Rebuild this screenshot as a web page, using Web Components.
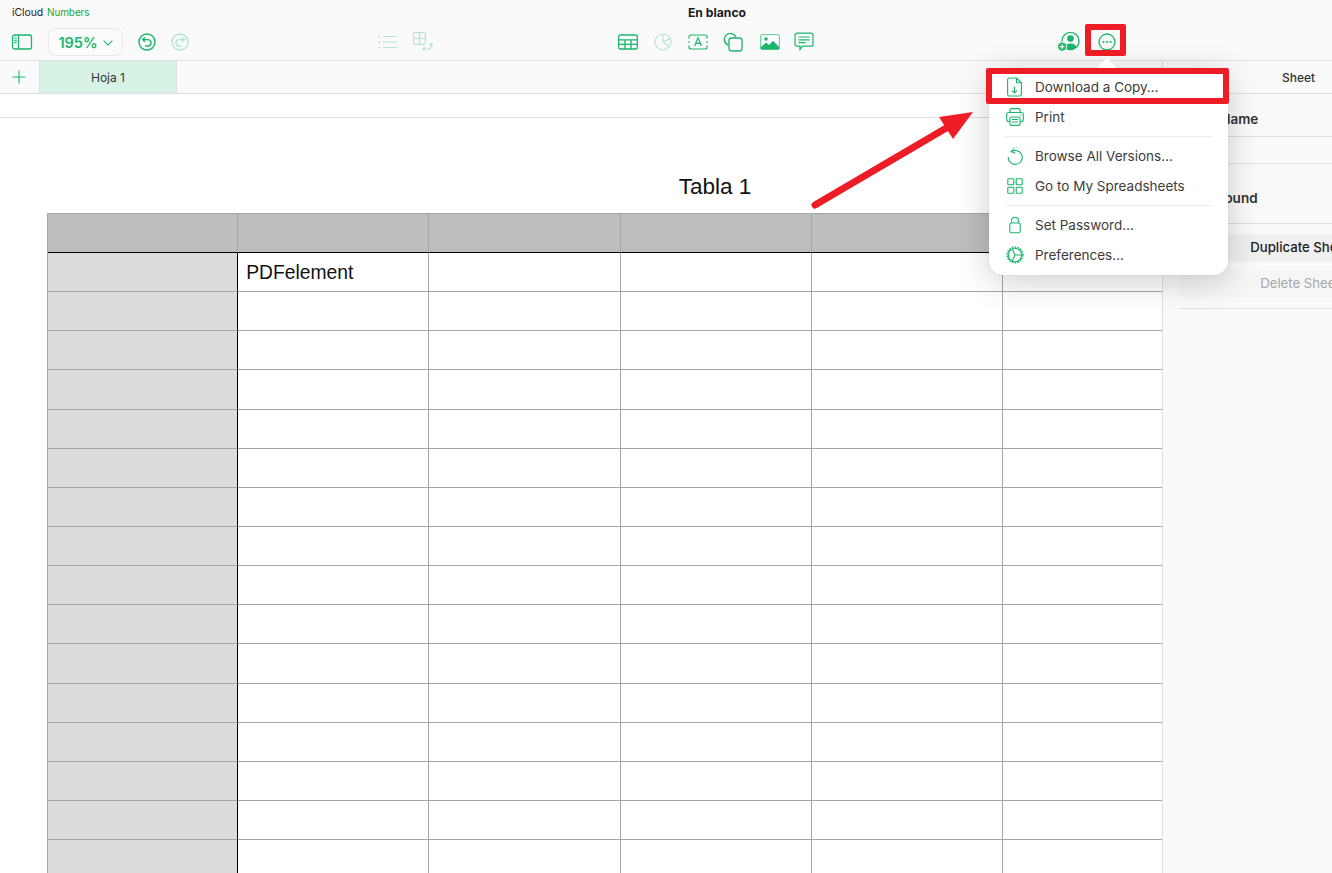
<!doctype html>
<html lang="es">
<head>
<meta charset="utf-8">
<title>En blanco - Numbers</title>
<style>
  html,body{margin:0;height:100%;overflow:hidden;background:#fff}
  body{font-family:Inter,"Liberation Sans",sans-serif}
</style>
</head>
<body>
<numbers-app></numbers-app>
<script>
const G = "#1bb56c";
const ICONS = {
  sidebar: `<svg width="22" height="18" viewBox="0 0 22 18" fill="none" stroke="${G}" stroke-width="1.3"><rect x="1.5" y="2" width="19" height="14" rx="2"/><path d="M7.5 2v14"/><path d="M3.2 5h2.6M3.2 7.2h2.6M3.2 9.4h2.6" stroke-width="1.1"/></svg>`,
  undo: `<svg width="20" height="20" viewBox="0 0 20 20" fill="none" stroke="${G}" stroke-width="1.4"><circle cx="10" cy="10" r="8"/><path d="M8 5.4 5.6 7.6 8 9.8"/><path d="M5.8 7.6h5a3.2 3.2 0 0 1 0 6.4H8.2"/></svg>`,
  redo: `<svg width="20" height="20" viewBox="0 0 20 20" fill="none" stroke="${G}" stroke-width="1.4"><circle cx="10" cy="10" r="8"/><path d="M12 5.4l2.4 2.2L12 9.8"/><path d="M14.2 7.600h-5a3.2 3.2 0 0 0 0 6.4h2.6"/></svg>`,
  list: `<svg width="20" height="16" viewBox="0 0 20 16" fill="none" stroke="${G}" stroke-width="1.2"><path d="M5 2.5h14M5 8h14M5 13.5h14"/><path d="M.5 2.5h1.6M.5 8h1.6M.5 13.5h1.6" stroke-width="1.8"/></svg>`,
  arrange: `<svg width="20" height="20" viewBox="0 0 20 20" fill="none" stroke="${G}" stroke-width="1.2"><rect x=".6" y=".6" width="11.8" height="11.8" rx="1.5"/><path d="M6.5.6v11.8M.6 6.5h11.8"/><path d="M10 17h5.500a2.5 2.5 0 0 0 2.5-2.5V12"/><path d="M11.8 15.2 10 17l1.8 1.8M16.200 13.200l1.8-1.8 1.8 1.8"/></svg>`,
  table: `<svg width="20" height="16" viewBox="0 0 20 16" fill="none" stroke="${G}" stroke-width="1.3"><rect x=".7" y="1" width="18.6" height="14" rx="1.6"/><path d="M.7 5.8h18.6M.7 10.4h18.6M7 5.8V15M13 5.8V15"/></svg>`,
  pie: `<svg width="18" height="18" viewBox="0 0 18 18" fill="none" stroke="${G}" stroke-width="1.2"><circle cx="9" cy="9" r="8"/><path d="M9 1v8l6.2 4.8M9 9l7.2-3.4"/></svg>`,
  text: `<svg width="20" height="16" viewBox="0 0 20 16" fill="none" stroke="${G}" stroke-width="1.2"><path d="M1 4.6V3a2 2 0 0 1 2-2h14a2 2 0 0 1 2 2v1.6M1 11.4V13a2 2 0 0 0 2 2h14a2 2 0 0 0 2-2v-1.6M0 8h2M18 8h2"/><path d="M6.6 12 10 3.8 13.4 12M7.8 9.4h4.4"/></svg>`,
  shape: `<svg width="20" height="20" viewBox="0 0 20 20" fill="none" stroke="${G}" stroke-width="1.3"><path d="M5.6 13.2A6 6 0 1 1 13 5.4"/><rect x="6" y="6" width="13" height="13" rx="2.5"/></svg>`,
  image: `<svg width="20" height="16" viewBox="0 0 20 16"><rect x=".6" y=".6" width="18.8" height="14.8" rx="2" fill="#fff" stroke="${G}" stroke-opacity=".6" stroke-width="1.2"/><circle cx="6" cy="5" r="1.8" fill="${G}"/><path d="M.6 13.5 6 8.5l3 2.6 4-4.4 6.4 6.6v.6a1.6 1.6 0 0 1-1.6 1.6H2.2a1.6 1.6 0 0 1-1.6-1.6z" fill="${G}"/></svg>`,
  comment: `<svg width="20" height="20" viewBox="0 0 20 20" fill="none" stroke="${G}" stroke-width="1.2"><path d="M3 1.2h14A2 2 0 0 1 19 3.2v9a2 2 0 0 1-2 2H8.500L6 17.4v-3.2H3a2 2 0 0 1-2-2v-9a2 2 0 0 1 2-2z"/><path d="M4.5 5h11M4.5 7.8h11M4.5 10.6h7"/></svg>`,
  collab: `<svg width="24" height="22" viewBox="0 0 24 22" fill="none"><circle cx="13.5" cy="10" r="8.6" stroke="${G}" stroke-width="1.3"/><circle cx="13.5" cy="7.6" r="3.3" fill="${G}"/><path d="M7.6 16c.8-2.600 3-3.600 5.9-3.600s5.100 1 5.900 3.600a8.600 8.600 0 0 1-11.800 0z" fill="${G}"/><circle cx="5.2" cy="15.6" r="4.6" fill="${G}" stroke="#fafafa" stroke-width="1"/><path d="M5.2 13.2v4.8M2.8 15.6h4.8" stroke="#fff" stroke-width="1.2"/></svg>`,
  more: `<svg width="20" height="20" viewBox="0 0 20 20" fill="none"><circle cx="10" cy="10" r="8" stroke="${G}" stroke-width="1.3"/><g fill="${G}"><circle cx="6.4" cy="10" r="1.1"/><circle cx="10" cy="10" r="1.1"/><circle cx="13.6" cy="10" r="1.1"/></g></svg>`,
  plus: `<svg width="14" height="14" viewBox="0 0 14 14" fill="none" stroke="${G}" stroke-width="1.1"><path d="M7 .5v13M.5 7h13"/></svg>`,
  download: `<svg width="16" height="20" viewBox="0 0 16 20" fill="none" stroke="${G}" stroke-width="1.1"><path d="M2.4 1H9.5L14.4 5.8V17.2a1.8 1.8 0 0 1-1.8 1.8H2.4A1.8 1.8 0 0 1 .6 17.2V2.8A1.8 1.8 0 0 1 2.4 1z"/><path d="M9.500 1v4.800h4.900"/><path d="M7.500 9.500v6.500M5 13.600 7.500 16 10 13.600"/></svg>`,
  print: `<svg width="18" height="18" viewBox="0 0 18 18" fill="none" stroke="${G}" stroke-width="1.1"><path d="M4 4.5V2a1.4 1.4 0 0 1 1.4-1.4h7.2A1.4 1.4 0 0 1 14 2v2.5"/><rect x=".7" y="4.5" width="16.6" height="9" rx="2"/><rect x="4" y="9" width="10" height="8.4" rx="1.2" fill="#fff"/><path d="M6 11.5h6M6 14h6"/><path d="M14.3 7h1" stroke-width="1.5"/></svg>`,
  versions: `<svg width="16" height="18" viewBox="0 0 16 18" fill="none" stroke="${G}" stroke-width="1.1"><path d="M3.5 5.2A7 7 0 1 1 1.2 10"/><path d="M7.5.8 4 4.600l4.500 1.600" stroke-width="1"/></svg>`,
  grid: `<svg width="16" height="16" viewBox="0 0 16 16" fill="none" stroke="${G}" stroke-width="1.1"><rect x=".8" y=".8" width="6" height="6" rx=".8"/><rect x="9.2" y=".8" width="6" height="6" rx=".8"/><rect x=".8" y="9.2" width="6" height="6" rx=".8"/><rect x="9.2" y="9.2" width="6" height="6" rx=".8"/></svg>`,
  lock: `<svg width="14" height="18" viewBox="0 0 14 18" fill="none" stroke="${G}" stroke-width="1.1"><rect x="1.8" y="7" width="10.4" height="9.8" rx="1.6"/><path d="M3.6 7V4.6a3.4 3.4 0 0 1 6.8 0V7"/></svg>`,
  gear: `<svg width="18" height="18" viewBox="0 0 18 18" fill="none" stroke="${G}" stroke-width="1.1"><circle cx="9" cy="9" r="7.9" stroke-width="1.4" stroke-dasharray="1.6 1.2"/><circle cx="9" cy="9" r="6.7"/><path d="M6.4 3.400 9 9l-2.600 5.600M9 9h6.700"/></svg>`,
};

class AppToolbar extends HTMLElement {
  constructor() { super(); this.attachShadow({ mode: "open" }); }
  connectedCallback() {
    const btn = (n, cls = "", st = "") => `<span class="ic ${cls}" style="${st}">${ICONS[n]}</span>`;
    this.shadowRoot.innerHTML = `
      <style>
        :host{display:block;height:60px;background:#fafafa;border-bottom:1px solid #dedede;font-family:Inter,"Liberation Sans",sans-serif}
        .top{display:flex;align-items:center;height:24px;position:relative}
        .brand{font-size:10.5px;padding-left:12px;color:#1d1d1f;letter-spacing:-.1px;width:120px;flex:0 0 auto}
        .brand b{font-weight:400;color:#22a52f;margin-left:1px;font-size:10px}
        .title{margin-left:555px;width:60px;text-align:center;font-size:12.2px;font-weight:700;color:#1d1d1f;white-space:nowrap}
        .bar{display:flex;align-items:center;height:36px;padding-left:10px}
        .ic{display:flex;align-items:center;justify-content:center;width:24px;height:24px;flex:0 0 auto;margin-left:11px}
        .ic.first{margin-left:0}
        .dim{opacity:.3}
        .zoom{display:flex;align-items:center;justify-content:center;gap:5px;box-sizing:border-box;width:75px;height:28px;margin-left:14px;border:1px solid #e8e8e8;border-radius:8px;background:#fbfbfb;color:${G};font-size:14.5px;font-weight:600}
        .zoom svg{margin-top:1px}
      </style>
      <div class="top"><div class="brand">iCloud <b>Numbers</b></div><div class="title">En blanco</div></div>
      <div class="bar">
        ${btn("sidebar", "first")}
        <div class="zoom">195% <svg width="10" height="6" viewBox="0 0 10 6" fill="none" stroke="${G}" stroke-width="1.1"><path d="M.6.6 5 5 9.4.6"/></svg></div>
        ${btn("undo", "", "margin-left:12px")}
        ${btn("redo", "dim", "margin-left:9px")}
        ${btn("list", "dim", "margin-left:184px")}${btn("arrange", "dim")}
        ${btn("table", "", "margin-left:181px")}${btn("pie", "dim")}${btn("text")}${btn("shape")}${btn("image", "", "margin-left:13px")}${btn("comment", "", "margin-left:10px")}
        ${btn("collab", "", "margin-left:241px")}${btn("more", "", "margin-left:14px")}
      </div>`;
  }
}

class SheetTabs extends HTMLElement {
  constructor() { super(); this.attachShadow({ mode: "open" }); }
  connectedCallback() {
    this.shadowRoot.innerHTML = `
      <style>
        :host{display:flex;height:32px;background:#fafafa;border-bottom:1px solid #dedede;font-family:Inter,"Liberation Sans",sans-serif;font-size:12px;color:#333}
        .add{display:flex;align-items:center;justify-content:center;width:38px;padding-right:1px;border-right:1px solid #dedede}
        .tab{display:flex;align-items:center;justify-content:center;width:137px;padding-top:1px;box-sizing:border-box;background:#d6f3e6;border-right:1px solid #dedede}
        .fill{flex:1}
        .panel{display:flex;align-items:center;justify-content:center;padding-top:1px;flex:0 0 272px;margin-right:-102px;border-left:1px solid #dedede;font-weight:500;box-sizing:border-box}
      </style>
      <div class="add">${ICONS.plus}</div>
      <div class="tab">Hoja 1</div>
      <div class="fill"></div>
      <div class="panel">Sheet</div>`;
  }
}

class SheetTable extends HTMLElement {
  constructor() { super(); this.attachShadow({ mode: "open" }); }
  connectedCallback() {
    const rows = 16, cols = 6;
    let cells = "";
    for (let c = 0; c < cols; c++) cells += `<div class="c h"></div>`;
    for (let r = 0; r < rows; r++) {
      for (let c = 0; c < cols; c++) {
        const txt = r === 0 && c === 1 ? "PDFelement" : "";
        cells += `<div class="c${c === 0 ? " l" : ""}">${txt}</div>`;
      }
    }
    this.shadowRoot.innerHTML = `
      <style>
        :host{display:block;font-family:"Liberation Sans",Arial,sans-serif;color:#111}
        .name{height:54px;width:1430px;text-align:center;font-size:22.5px;line-height:28px;padding-top:14px;box-sizing:border-box}
        .grid{display:grid;grid-template-columns:190.2px repeat(5,191.2px);grid-template-rows:39px repeat(16,39.15px);border-left:1px solid #a6a6a6;margin-left:47px;width:max-content;box-sizing:border-box;border-top:1px solid #a6a6a6}
        .c{box-sizing:border-box;border-right:1px solid #a6a6a6;border-bottom:1px solid #a6a6a6;background:#fff;font-size:19.3px;display:flex;align-items:center;padding:2px 0 0 8px;white-space:nowrap}
        .h{background:#bdbfbe;border-bottom-color:#000}
        .l{background:#dcdcdc;border-right-color:#000}
      </style>
      <div class="name">Tabla 1</div>
      <div class="grid">${cells}</div>`;
  }
}

class InspectorPanel extends HTMLElement {
  constructor() { super(); this.attachShadow({ mode: "open" }); }
  connectedCallback() {
    this.shadowRoot.innerHTML = `
      <style>
        :host{display:block;flex:0 0 276px;box-sizing:border-box;background:#fafafa;border-left:1px solid #dedede;padding:0 17px 0 16px;font-family:Inter,"Liberation Sans",sans-serif;font-size:13.2px;color:#1d1d1f}
        h3{margin:0;font-size:13.5px;font-weight:600;color:#333;white-space:nowrap}
        .name{height:43px;display:flex;align-items:center;padding-top:8px;box-sizing:border-box;border-bottom:1px solid #dedede}
        .input{height:27px;box-sizing:border-box;border-bottom:1px solid #dedede}
        .bg{height:60px;display:flex;align-items:center;padding-top:8px;box-sizing:border-box;border-bottom:1px solid #dedede}
        .btns{display:flex;flex-direction:column;gap:8px;padding:10px 0;border-bottom:1px solid #dedede}
        .b{height:28px;display:flex;align-items:center;justify-content:center;padding-bottom:2px;box-sizing:border-box;border-radius:6px;background:#f0f0f0;font-weight:500;white-space:nowrap}
        .d{background:#f6f6f6;color:#a8a8a8;font-weight:400}
      </style>
      <div class="name"><h3>Sheet Name</h3></div>
      <div class="input"></div>
      <div class="bg"><h3>Background</h3></div>
      <div class="btns"><div class="b">Duplicate Sheet</div><div class="b d">Delete Sheet</div></div>`;
  }
}

class MoreMenu extends HTMLElement {
  constructor() { super(); this.attachShadow({ mode: "open" }); }
  connectedCallback() {
    const it = (icon, label) => `<div class="it"><span class="i">${ICONS[icon]}</span>${label}</div>`;
    this.shadowRoot.innerHTML = `
      <style>
        :host{display:block;position:absolute;left:989px;top:68px;width:239px;box-sizing:border-box;padding:4px 0 5px;background:#fff;border-radius:14px;box-shadow:0 0 1px rgba(0,0,0,.2),0 6px 34px rgba(0,0,0,.2);font-family:Inter,"Liberation Sans",sans-serif;font-size:13.5px;color:#3c3c3c}
        :host::before{content:"";position:absolute;left:111px;top:-7px;width:14px;height:14px;background:#fff;transform:rotate(45deg)}
        .it{position:relative;display:flex;align-items:center;height:30px;white-space:nowrap}
        .i{display:flex;align-items:center;justify-content:center;width:24px;margin:0 8px 0 14px}
        hr{border:0;height:1px;background:#ececec;margin:4px 16px 4px}
      </style>
      ${it("download", "Download a Copy…")}${it("print", "Print")}<hr>
      ${it("versions", "Browse All Versions…")}${it("grid", "Go to My Spreadsheets")}<hr>
      ${it("lock", "Set Password…")}${it("gear", "Preferences…")}`;
  }
}

class RedCallouts extends HTMLElement {
  constructor() { super(); this.attachShadow({ mode: "open" }); }
  connectedCallback() {
    this.shadowRoot.innerHTML = `
      <style>
        :host{display:block;position:absolute;inset:0;pointer-events:none}
        .box{position:absolute;box-sizing:border-box;border:6px solid #ee1c25;border-radius:2px}
        svg{position:absolute;left:0;top:0}
      </style>
      <div class="box" style="left:1085px;top:24px;width:41px;height:32px"></div>
      <div class="box" style="left:986px;top:68px;width:243px;height:36px"></div>
      <svg width="1332" height="873" fill="#ee1c25"><path d="M815 205 948 127" stroke="#ee1c25" stroke-width="7" stroke-linecap="round"/><path d="M973 112 939 117 953 139z"/></svg>`;
  }
}

class NumbersApp extends HTMLElement {
  constructor() { super(); this.attachShadow({ mode: "open" }); }
  connectedCallback() {
    this.shadowRoot.innerHTML = `
      <style>
        :host{display:flex;flex-direction:column;position:relative;width:1332px;height:873px;overflow:hidden;background:#fff}
        .work{display:flex;flex:1;min-height:0;overflow:hidden}
        .canvas{flex:0 0 1162px;width:1162px;overflow:hidden}
        .ruler{height:23px;border-bottom:1px solid #dedede;margin-bottom:41px}
      </style>
      <app-toolbar></app-toolbar>
      <sheet-tabs></sheet-tabs>
      <div class="work">
        <div class="canvas"><div class="ruler"></div><sheet-table></sheet-table></div>
        <inspector-panel></inspector-panel>
      </div>
      <more-menu></more-menu>
      <red-callouts></red-callouts>`;
  }
}

customElements.define("app-toolbar", AppToolbar);
customElements.define("sheet-tabs", SheetTabs);
customElements.define("sheet-table", SheetTable);
customElements.define("inspector-panel", InspectorPanel);
customElements.define("more-menu", MoreMenu);
customElements.define("red-callouts", RedCallouts);
customElements.define("numbers-app", NumbersApp);
</script>
</body>
</html>
